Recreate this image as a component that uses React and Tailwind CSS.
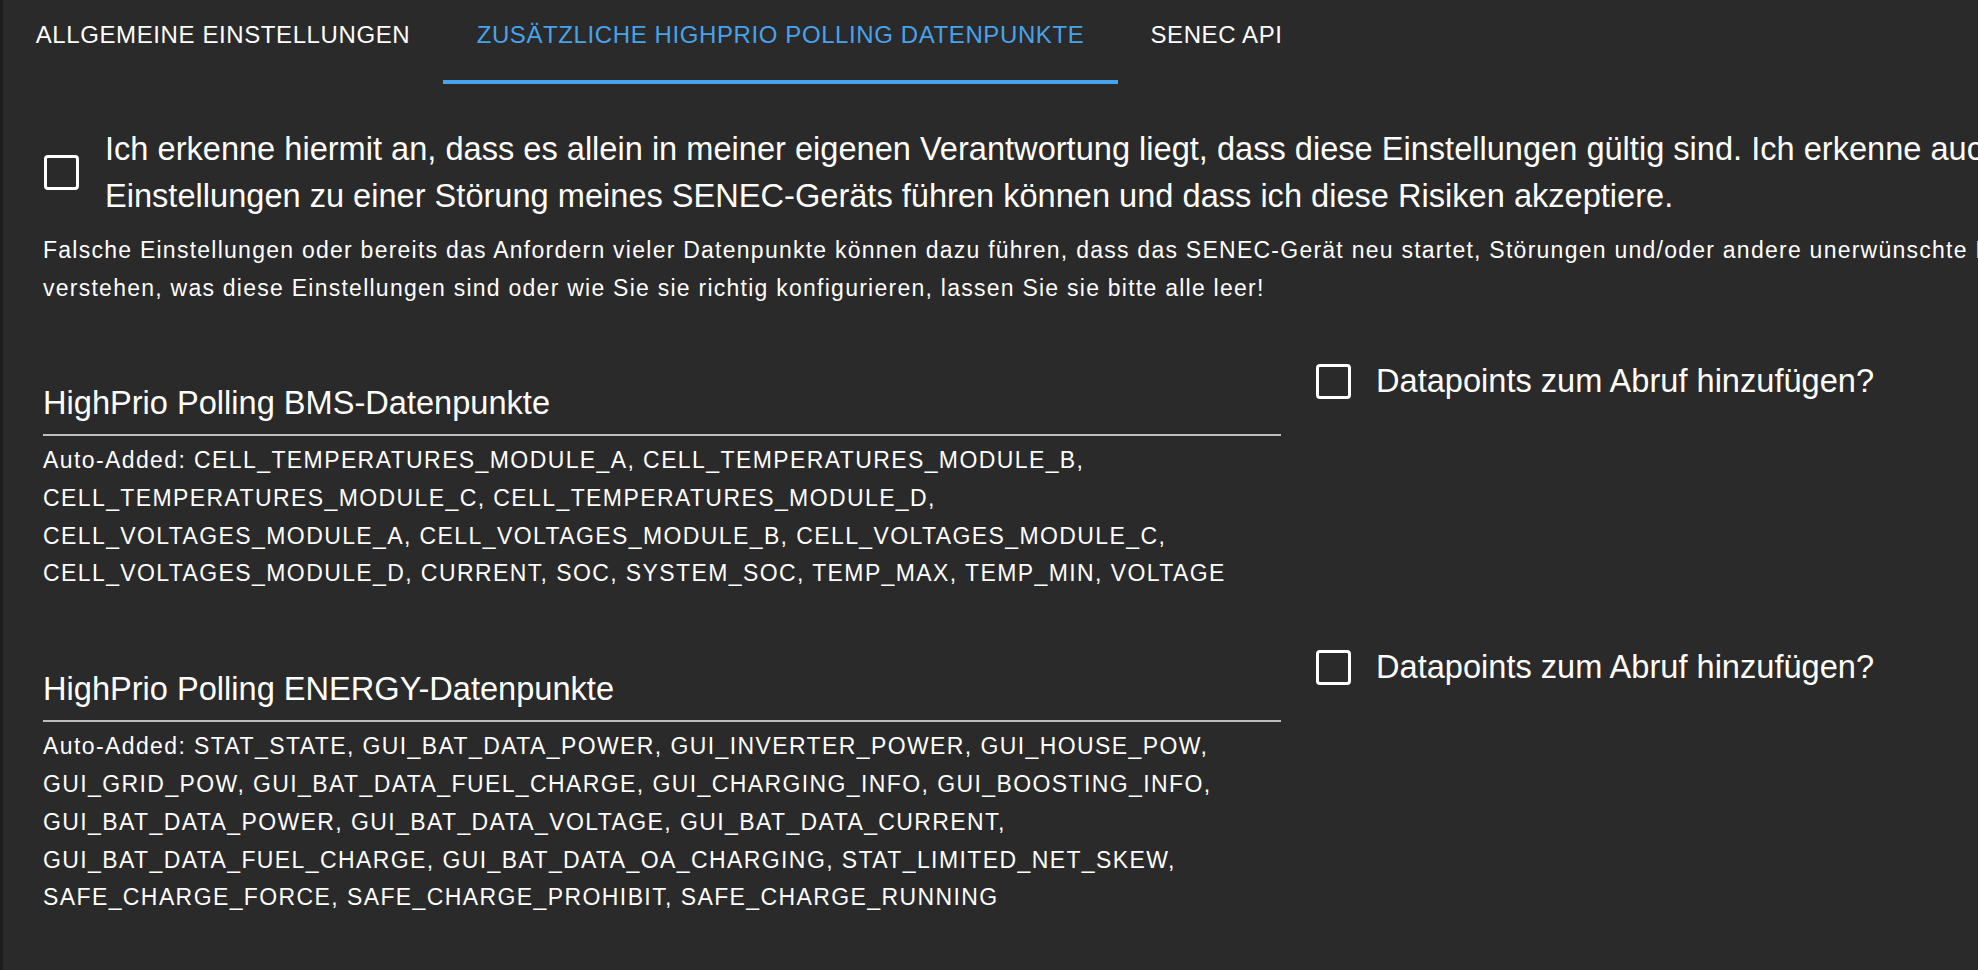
import React from "react";

const tabs = [
  { label: "ALLGEMEINE EINSTELLUNGEN", width: "w-[440px]", active: false },
  { label: "ZUSÄTZLICHE HIGHPRIO POLLING DATENPUNKTE", width: "w-[675px]", active: true },
  { label: "SENEC API", width: "w-[197px]", active: false },
];

const sections = [
  {
    title: "HighPrio Polling BMS-Datenpunkte",
    lines: [
      "Auto-Added: CELL_TEMPERATURES_MODULE_A, CELL_TEMPERATURES_MODULE_B,",
      "CELL_TEMPERATURES_MODULE_C, CELL_TEMPERATURES_MODULE_D,",
      "CELL_VOLTAGES_MODULE_A, CELL_VOLTAGES_MODULE_B, CELL_VOLTAGES_MODULE_C,",
      "CELL_VOLTAGES_MODULE_D, CURRENT, SOC, SYSTEM_SOC, TEMP_MAX, TEMP_MIN, VOLTAGE",
    ],
  },
  {
    title: "HighPrio Polling ENERGY-Datenpunkte",
    lines: [
      "Auto-Added: STAT_STATE, GUI_BAT_DATA_POWER, GUI_INVERTER_POWER, GUI_HOUSE_POW,",
      "GUI_GRID_POW, GUI_BAT_DATA_FUEL_CHARGE, GUI_CHARGING_INFO, GUI_BOOSTING_INFO,",
      "GUI_BAT_DATA_POWER, GUI_BAT_DATA_VOLTAGE, GUI_BAT_DATA_CURRENT,",
      "GUI_BAT_DATA_FUEL_CHARGE, GUI_BAT_DATA_OA_CHARGING, STAT_LIMITED_NET_SKEW,",
      "SAFE_CHARGE_FORCE, SAFE_CHARGE_PROHIBIT, SAFE_CHARGE_RUNNING",
    ],
  },
];

function CheckBox() {
  return <span className="block w-[35px] h-[35px] shrink-0 rounded-[4px] border-[3px] border-white" />;
}

export default function App() {
  return (
    <div className="min-h-screen w-full overflow-hidden bg-[#2a2a2a] text-white border-l-[3px] border-[#1d1d1d] font-['Liberation_Sans',Arial,sans-serif]">
      {/* Tabs */}
      <div className="flex h-[84px]">
        {tabs.map((t) => (
          <div
            key={t.label}
            className={`${t.width} h-[84px] flex justify-center pt-[21px] text-[24px] leading-[28px] tracking-[0.6px] whitespace-nowrap ${
              t.active ? "text-[#47a3ec] border-b-4 border-[#47a3ec]" : "text-white"
            }`}
          >
            {t.label}
          </div>
        ))}
      </div>

      <div className="px-[40px]">
        {/* Disclaimer */}
        <div className="mt-[41px] flex items-center gap-[26px]">
          <span className="ml-[1px]">
            <CheckBox />
          </span>
          <div className="text-[32.6px] leading-[47px] whitespace-nowrap">
            <div>
              Ich erkenne hiermit an, dass es allein in meiner eigenen Verantwortung liegt, dass diese Einstellungen gültig sind. Ich erkenne auch an, dass falsche
            </div>
            <div>
              Einstellungen zu einer Störung meines SENEC-Geräts führen können und dass ich diese Risiken akzeptiere.
            </div>
          </div>
        </div>

        <div className="mt-[12px] text-[23px] leading-[38px] tracking-[1.25px] whitespace-nowrap">
          <div>
            Falsche Einstellungen oder bereits das Anfordern vieler Datenpunkte können dazu führen, dass das SENEC-Gerät neu startet, Störungen und/oder andere unerwünschte Effekte auftreten. Wenn Sie nicht genau
          </div>
          <div>
            verstehen, was diese Einstellungen sind oder wie Sie sie richtig konfigurieren, lassen Sie sie bitte alle leer!
          </div>
        </div>

        {/* Sections */}
        {sections.map((s) => (
          <div key={s.title} className="mt-[50px] flex gap-[35px]">
            <div className="w-[1238px] shrink-0 pt-[21.5px]">
              <div className="text-[32.6px] leading-[48px]">{s.title}</div>
              <div className="mt-[7.5px] h-[2px] bg-[#bdbdbd]" />
              <div className="mt-[6px] text-[23px] leading-[37.8px] tracking-[1.4px] whitespace-nowrap">
                {s.lines.map((l) => (
                  <div key={l}>{l}</div>
                ))}
              </div>
            </div>
            <div className="flex items-center gap-[25px] h-[48px] shrink-0">
              <CheckBox />
              <span className="text-[32.6px] leading-[48px] whitespace-nowrap">Datapoints zum Abruf hinzufügen?</span>
            </div>
          </div>
        ))}
      </div>
    </div>
  );
}
